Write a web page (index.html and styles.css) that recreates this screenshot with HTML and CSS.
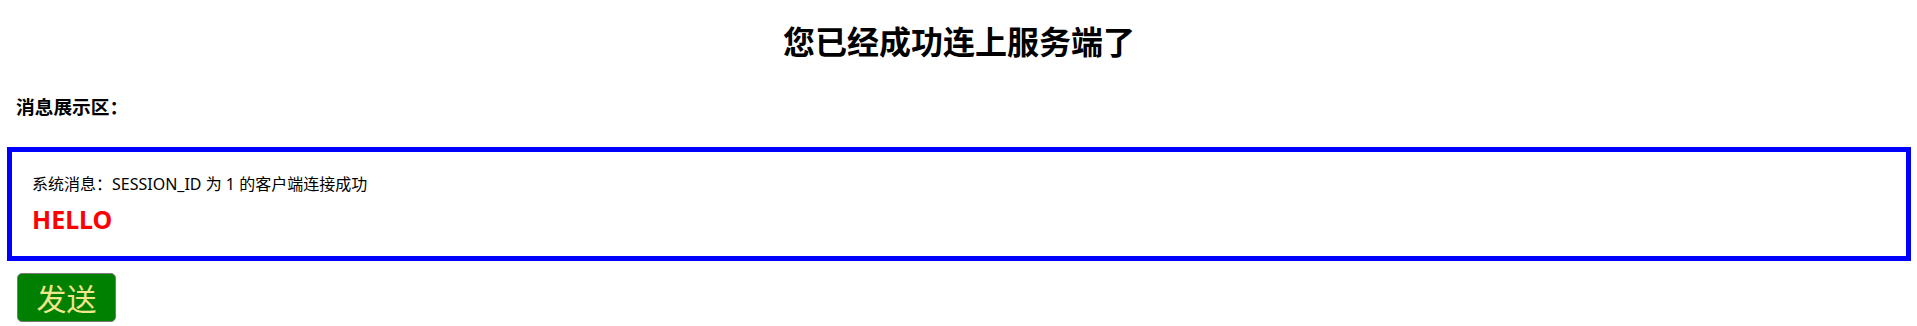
FILE: index.html
```html
<!DOCTYPE html>
<html lang="zh-CN">
<head>
<meta charset="utf-8">
<title>WebSocket</title>
<link rel="stylesheet" href="styles.css">
</head>
<body>
  <h1 class="title">您已经成功连上服务端了</h1>
  <h3 class="label">消息展示区：</h3>
  <div class="board">
    <p class="sys-msg">系统消息：SESSION_ID 为 1 的客户端连接成功</p>
    <h2 class="hello">HELLO</h2>
  </div>
  <button class="send-btn" type="button">发送</button>
</body>
</html>
```

FILE: styles.css
```css
html, body {
  background: #ffffff;
}

body {
  margin: 0;
  padding: 0 6px 0 7px;
  font-family: "Noto Sans", "Noto Sans CJK SC", sans-serif;
  color: #000000;
}

.title {
  margin: 20px 0 0;
  text-align: center;
  font-size: 32px;
  line-height: 40px;
  font-weight: bold;
  font-family: "Noto Sans CJK SC", sans-serif;
}

.label {
  margin: 34px 0 0;
  padding-left: 9px;
  font-size: 18.72px;
  line-height: 24px;
  font-weight: bold;
  font-family: "Noto Sans CJK SC", sans-serif;
}

.board {
  margin-top: 29px;
  border: 5px solid #0000ff;
  padding: 21px 20px 22px;
}

.sys-msg {
  margin: 0;
  font-size: 16px;
  line-height: 22px;
}

.hello {
  margin: 9px 0 0;
  font-size: 25px;
  line-height: 30px;
  font-weight: bold;
  color: #ff0000;
}

.send-btn {
  display: block;
  margin: 12px 0 0 10px;
  width: 99px;
  height: 49px;
  padding: 0;
  background: #008000;
  color: #f0e68c;
  border: 1px solid #7a7a7a;
  border-radius: 5px;
  font-family: "Noto Sans CJK SC", sans-serif;
  font-size: 30px;
  line-height: 47px;
}
```
